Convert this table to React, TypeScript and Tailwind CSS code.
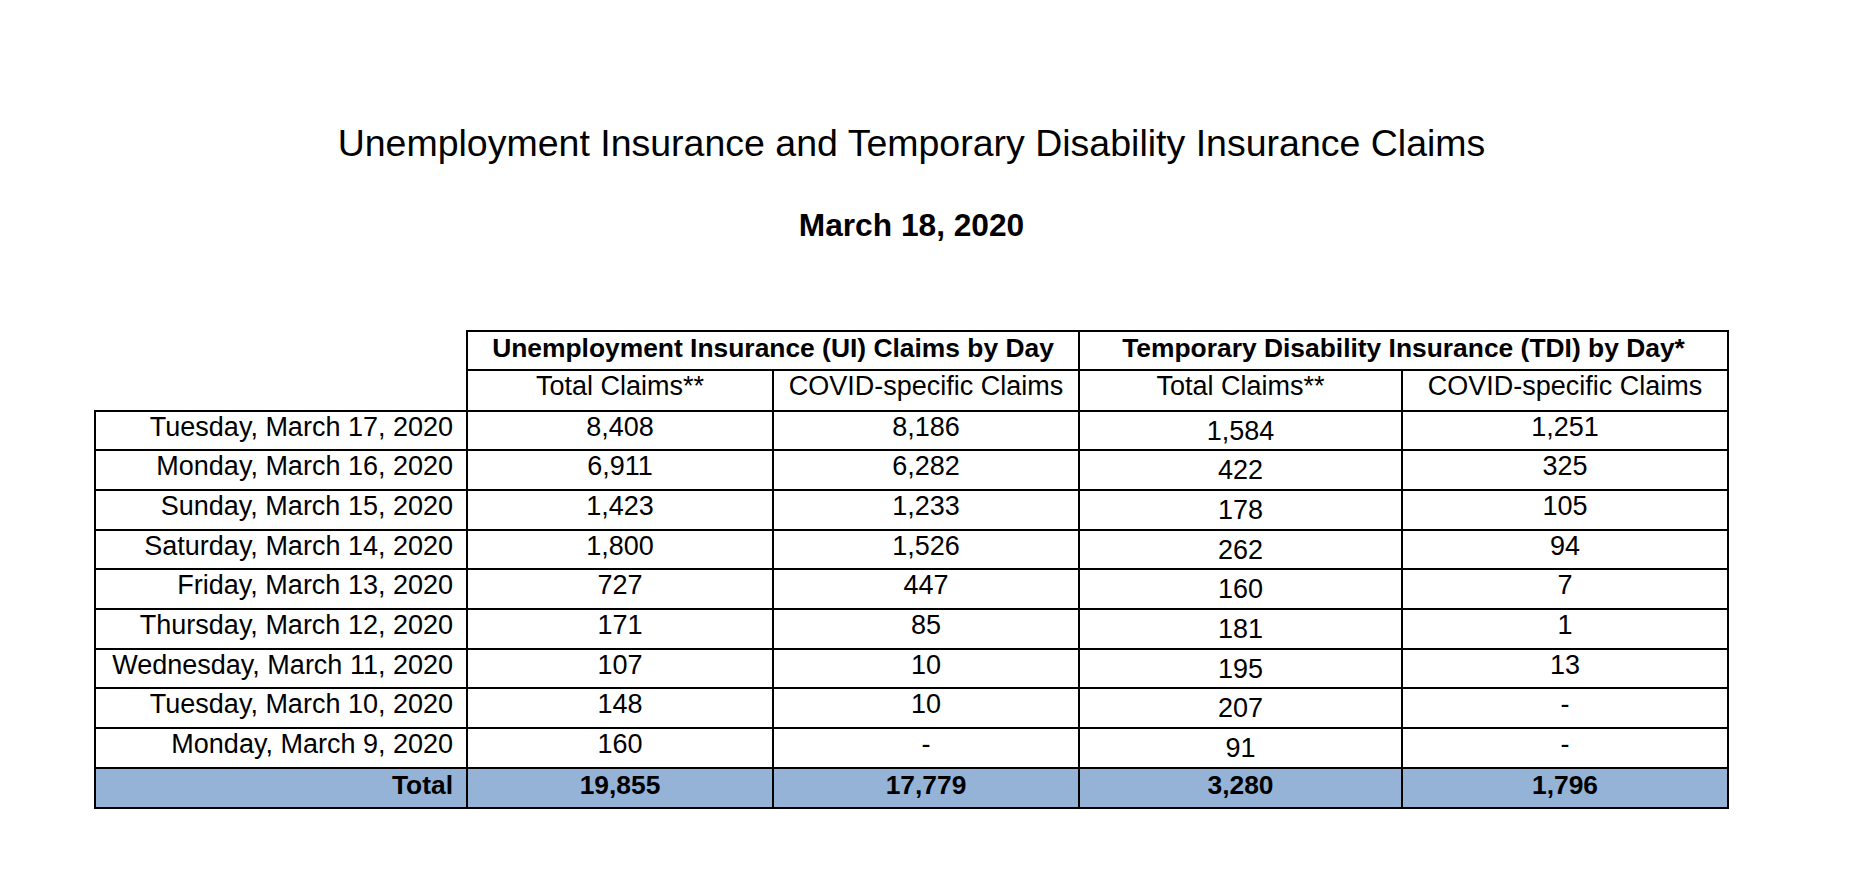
const rows: [string, string, string, string, string][] = [
  ["Tuesday, March 17, 2020", "8,408", "8,186", "1,584", "1,251"],
  ["Monday, March 16, 2020", "6,911", "6,282", "422", "325"],
  ["Sunday, March 15, 2020", "1,423", "1,233", "178", "105"],
  ["Saturday, March 14, 2020", "1,800", "1,526", "262", "94"],
  ["Friday, March 13, 2020", "727", "447", "160", "7"],
  ["Thursday, March 12, 2020", "171", "85", "181", "1"],
  ["Wednesday, March 11, 2020", "107", "10", "195", "13"],
  ["Tuesday, March 10, 2020", "148", "10", "207", "-"],
  ["Monday, March 9, 2020", "160", "-", "91", "-"],
];

const cell = "border-2 border-black align-top text-center";

export default function App() {
  return (
    <div className="min-h-[892px] w-[1862px] bg-white text-black font-['Liberation_Sans',Arial,sans-serif]">
      <div className="pl-[95px]">
        <div className="flex w-[1633px] flex-col items-center">
          <h1 className="pt-[122px] text-[37.5px] font-normal leading-[1.15]">
            Unemployment Insurance and Temporary Disability Insurance Claims
          </h1>
          <h2 className="mt-[42px] text-[31.7px] font-bold leading-[1.15]">March 18, 2020</h2>

          <table className="mt-[86px] w-[1633px] table-fixed border-collapse text-[27px] leading-[1.15]">
            <colgroup>
              <col className="w-[372px]" />
              <col className="w-[306px]" />
              <col className="w-[306px]" />
              <col className="w-[323px]" />
              <col className="w-[326px]" />
            </colgroup>
            <thead>
              <tr className="h-[39px]">
                <th rowSpan={2} className="border-0" />
                <th colSpan={2} className={`${cell} pt-px text-[26.4px] font-bold`}>
                  Unemployment Insurance (UI) Claims by Day
                </th>
                <th colSpan={2} className={`${cell} pt-px text-[26.4px] font-bold`}>
                  Temporary Disability Insurance (TDI) by Day*
                </th>
              </tr>
              <tr className="h-[41px]">
                <th className={`${cell} pt-0 font-normal`}>Total Claims**</th>
                <th className={`${cell} pt-0 font-normal`}>COVID-specific Claims</th>
                <th className={`${cell} pt-0 font-normal`}>Total Claims**</th>
                <th className={`${cell} pt-0 font-normal`}>COVID-specific Claims</th>
              </tr>
            </thead>
            <tbody>
              {rows.map((r) => (
                <tr key={r[0]} className="h-[39.7px]">
                  <td className="border-2 border-black pr-[13px] pt-0 text-right align-top">{r[0]}</td>
                  <td className={`${cell} pt-0`}>{r[1]}</td>
                  <td className={`${cell} pt-0`}>{r[2]}</td>
                  <td className={`${cell} pt-[4px]`}>{r[3]}</td>
                  <td className={`${cell} pt-0`}>{r[4]}</td>
                </tr>
              ))}
              <tr className="h-[40px] bg-[#95b3d7] text-[26.4px] font-bold">
                <td className="border-2 border-black pr-[13px] pt-px text-right align-top">Total</td>
                <td className={`${cell} pt-px`}>19,855</td>
                <td className={`${cell} pt-px`}>17,779</td>
                <td className={`${cell} pt-px`}>3,280</td>
                <td className={`${cell} pt-px`}>1,796</td>
              </tr>
            </tbody>
          </table>
        </div>
      </div>
    </div>
  );
}
